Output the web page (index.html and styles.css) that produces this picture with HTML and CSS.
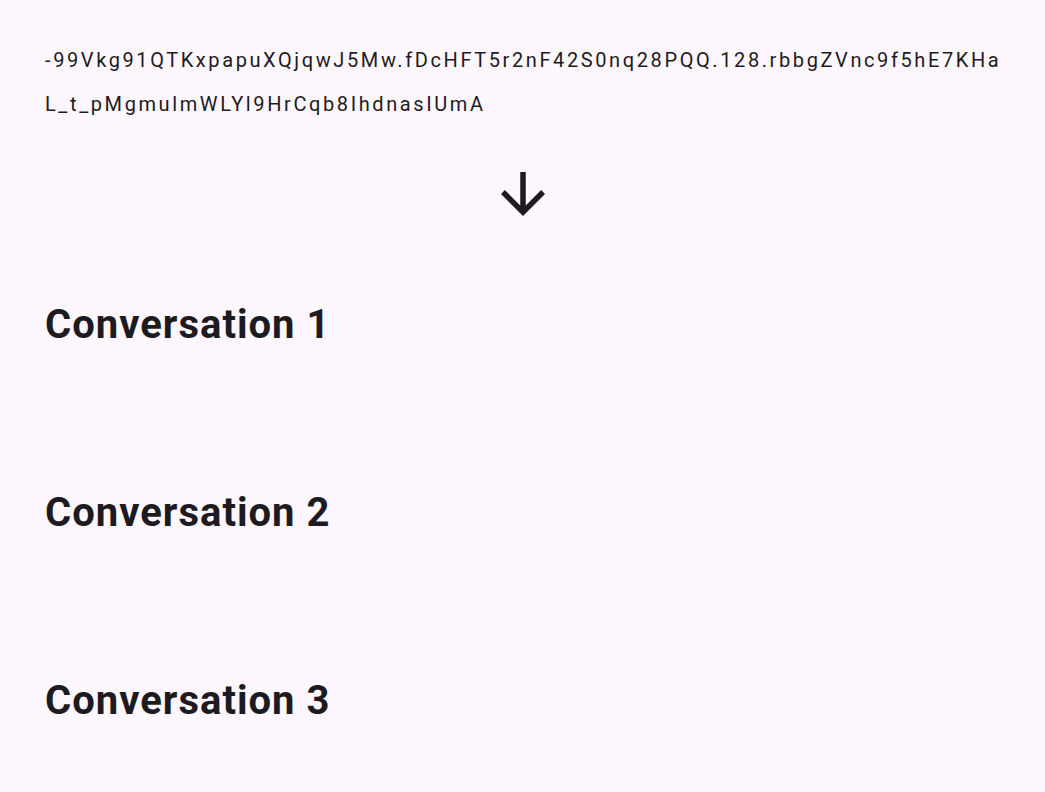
FILE: index.html
```html
<!DOCTYPE html>
<html>
<head>
<meta charset="utf-8">
<link rel="stylesheet" href="styles.css">
</head>
<body>
<main class="screen">
  <p class="token">-99Vkg91QTKxpapuXQjqwJ5Mw.fDcHFT5r2nF42S0nq28PQQ.128.rbbgZVnc9f5hE7KHa L_t_pMgmulmWLYl9HrCqb8IhdnasIUmA</p>
  <div class="arrow-row">
    <svg class="arrow" viewBox="4 4 16 16" width="44" height="44" aria-hidden="true">
      <path d="M20 12l-1.41-1.41L13 16.17V4h-2v12.17l-5.58-5.59L4 12l8 8 8-8z" fill="#1D1B20"/>
    </svg>
  </div>
  <ul class="conversations">
    <li class="conversation">Conversation 1</li>
    <li class="conversation">Conversation 2</li>
    <li class="conversation">Conversation 3</li>
  </ul>
</main>
</body>
</html>
```

FILE: styles.css
```css
html, body {
  margin: 0;
  padding: 0;
  background: #FEF7FF;
}
body {
  font-family: Roboto, "Noto Sans", sans-serif;
  color: #1D1B20;
  width: 1045px;
  height: 792px;
  overflow: hidden;
}
.screen {
  display: flex;
  flex-direction: column;
  padding: 38px 45px 0 45px;
}
.token {
  margin: 0;
  font-size: 20px;
  line-height: 44px;
  letter-spacing: 2.6px;
  word-break: break-all;
  width: 975px;
}
.arrow-row {
  display: flex;
  justify-content: center;
  margin-top: 46px;
}
.arrow {
  display: block;
}
.conversations {
  list-style: none;
  margin: 0;
  padding: 0;
  display: flex;
  flex-direction: column;
  margin-top: 85px;
}
.conversation {
  font-size: 40px;
  font-weight: 700;
  letter-spacing: 1px;
  line-height: 48px;
  height: 188px;
}
```
